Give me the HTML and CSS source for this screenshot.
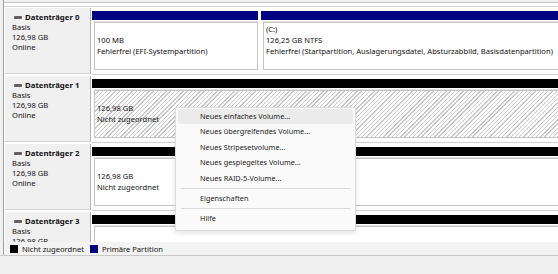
FILE: index.html
```
<!DOCTYPE html>
<html lang="de">
<head>
<meta charset="utf-8">
<link rel="stylesheet" href="styles.css">
</head>
<body>
<div class="app">
  <div class="main">
    <div class="list">
      <div class="topband"></div>
      <div class="disk">
        <div class="label">
          <div class="name"><span class="icon"></span>Datenträger 0</div>
          <div>Basis</div><div>126,98 GB</div><div>Online</div>
        </div>
        <div class="parts">
          <div class="part efi">
            <div class="bar primary"></div>
            <div class="box"><div>&nbsp;</div><div>100 MB</div><div>Fehlerfrei (EFI-Systempartition)</div></div>
          </div>
          <div class="part grow">
            <div class="bar primary"></div>
            <div class="box"><div>(C:)</div><div>126,25 GB NTFS</div><div>Fehlerfrei (Startpartition, Auslagerungsdatei, Absturzabbild, Basisdatenpartition)</div></div>
          </div>
        </div>
      </div>
      <div class="disk">
        <div class="label">
          <div class="name"><span class="icon"></span>Datenträger 1</div>
          <div>Basis</div><div>126,98 GB</div><div>Online</div>
        </div>
        <div class="parts">
          <div class="part grow">
            <div class="bar unalloc"></div>
            <div class="box hatch"><div>&nbsp;</div><div>126,98 GB</div><div>Nicht zugeordnet</div></div>
          </div>
        </div>
      </div>
      <div class="disk">
        <div class="label">
          <div class="name"><span class="icon"></span>Datenträger 2</div>
          <div>Basis</div><div>126,98 GB</div><div>Online</div>
        </div>
        <div class="parts">
          <div class="part grow">
            <div class="bar unalloc"></div>
            <div class="box"><div>&nbsp;</div><div>126,98 GB</div><div>Nicht zugeordnet</div></div>
          </div>
        </div>
      </div>
      <div class="disk">
        <div class="label">
          <div class="name"><span class="icon"></span>Datenträger 3</div>
          <div>Basis</div><div>126,98 GB</div><div>Online</div>
        </div>
        <div class="parts">
          <div class="part grow">
            <div class="bar unalloc"></div>
            <div class="box"><div>&nbsp;</div><div>126,98 GB</div><div>Nicht zugeordnet</div></div>
          </div>
        </div>
      </div>
    </div>
    <div class="legend">
      <span class="swatch black"></span><span class="ltext">Nicht zugeordnet</span>
      <span class="swatch navy"></span><span class="ltext">Primäre Partition</span>
    </div>
  </div>
  <div class="status"></div>

  <div class="menu">
    <div class="item hi">Neues einfaches Volume...</div>
    <div class="item">Neues übergreifendes Volume...</div>
    <div class="item">Neues Stripesetvolume...</div>
    <div class="item">Neues gespiegeltes Volume...</div>
    <div class="item">Neues RAID-5-Volume...</div>
    <div class="sep"></div>
    <div class="item">Eigenschaften</div>
    <div class="sep"></div>
    <div class="item">Hilfe</div>
  </div>
</div>
</body>
</html>
```
FILE: styles.css
```
html, body { margin: 0; padding: 0; }
body {
  width: 558px; height: 274px; overflow: hidden; background: #fff;
  font-family: "Noto Sans", "Segoe UI", sans-serif; font-size: 7.6px; color: #000;
}
.app { position: relative; width: 558px; height: 274px; overflow: hidden; background: #f0f0f0; }
.main { margin-left: 3px; border-left: 1px solid #a0a0a0; width: 640px; height: 255px; background: #fff; }
.list { height: 242px; overflow: hidden; }
.topband { height: 8px; background: linear-gradient(#f0f0f0 0 2px, #c8c8c8 2px 3px, #fff 3px 6px, #d0d0d0 6px 7px, #fff 7px); }
.disk { display: flex; height: 68px; }
.label {
  width: 86px; height: 66px; margin-left: 1px; padding: 4px 0 0 7px; box-sizing: border-box;
  background: #f0f0f0; border-right: 1px solid #b4b4b4; border-bottom: 1px solid #d0d0d0;
  line-height: 10px; color: #111;
}
.label .name { font-weight: bold; font-size: 7.8px; display: flex; align-items: center; }
.icon { display: inline-block; width: 8px; height: 3px; background: #606060; margin: 0 3px 0 2px; border-radius: 1px; }
.parts { flex: 1; display: flex; height: 66px; margin-left: 1px; border-bottom: 1px solid #d0d0d0; }
.part { display: flex; flex-direction: column; padding-top: 3px; margin-right: 3px; }
.part.efi { width: 166px; }
.part.grow { flex: 1; }
.bar { height: 9px; }
.bar.primary { background: #000080; }
.bar.unalloc { background: #000; }
.box {
  margin-top: 2px; height: 48px; box-sizing: border-box; border: 1px solid #c4c4c4;
  box-shadow: 0 -1px 0 #e4e4e4; margin-left: 2px;
  padding: 1px 0 0 2px; line-height: 11px; white-space: nowrap; color: #111; background: #fff;
}
.box.hatch { background: repeating-linear-gradient(135deg, #fff 0 2px, #c8c8c8 2px 3px); }
.legend { height: 13px; line-height: 12px; background: #f3f3f3; display: flex; align-items: center; padding-left: 6px; }
.swatch { width: 8px; height: 8px; margin-right: 4px; }
.swatch.black { background: #000; }
.swatch.navy { background: #000080; }
.ltext { margin-right: 6px; color: #111; }
.status { height: 18px; border-top: 1px solid #c8c8c8; background: #f0f0f0; }
.menu {
  position: absolute; left: 175px; top: 107px; width: 179px; padding: 1px 0 3px;
  background: #fafafa; border: 1px solid #dcdcdc; box-shadow: 0 2px 5px rgba(0,0,0,.12);
  font-size: 7.3px; color: #1a1a1a;
}
.item { height: 15.4px; line-height: 15.4px; padding-left: 22px; margin: 0 2px; border-radius: 3px; }
.item.hi { background: #ebebeb; }
.sep { height: 1px; background: #dadada; margin: 2px 5px; }
```
